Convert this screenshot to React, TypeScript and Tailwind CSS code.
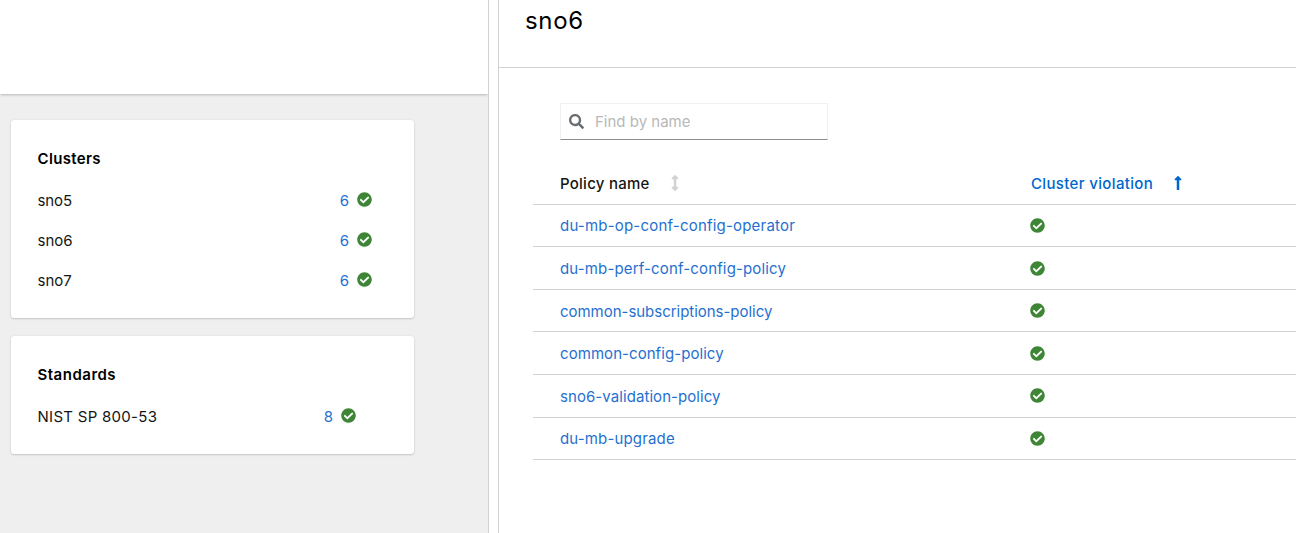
import { FaArrowsAltV, FaCheckCircle, FaLongArrowAltUp, FaSearch } from "react-icons/fa";

interface CardItem {
  name: string;
  count: number;
  className: string;
}

const clusters: CardItem[] = [
  { name: "sno5", count: 6, className: "tracking-[-0.1px]" },
  { name: "sno6", count: 6, className: "tracking-normal" },
  { name: "sno7", count: 6, className: "tracking-normal" },
];

const standards: CardItem[] = [
  { name: "NIST SP 800-53", count: 8, className: "tracking-[0.28px]" },
];

const policies = [
  { name: "du-mb-op-conf-config-operator", className: "tracking-[0.2px]", iconClass: "", height: "h-[42px]" },
  { name: "du-mb-perf-conf-config-policy", className: "pt-[2px] tracking-[0.15px]", iconClass: "", height: "h-[43px]" },
  { name: "common-subscriptions-policy", className: "pt-[2px] tracking-[-0.03px]", iconClass: "", height: "h-[42px]" },
  { name: "common-config-policy", className: "pt-[2px] tracking-[0.06px]", iconClass: "", height: "h-[43px]" },
  { name: "sno6-validation-policy", className: "pt-[2px] tracking-[0.07px]", iconClass: "mb-[2px]", height: "h-[43px]" },
  { name: "du-mb-upgrade", className: "tracking-[0.15px]", iconClass: "", height: "h-[42px]" },
];

function Card({ title, titleClass, items, rowClass }: { title: string; titleClass: string; items: CardItem[]; rowClass: string }) {
  return (
    <section className="rounded-[3px] bg-white pt-[27px] pb-[17px] pl-[26.5px] shadow-[0_1px_2px_rgba(3,3,3,0.16),0_0_2px_rgba(3,3,3,0.08)]">
      <h2 className={`mb-[10px] h-6 text-[15px] leading-6 font-semibold text-black ${titleClass}`}>{title}</h2>
      <ul>
        {items.map((item) => (
          <li key={item.name} className={`flex h-10 items-center justify-between ${rowClass}`}>
            <span className={`text-[#151515] ${item.className}`}>{item.name}</span>
            <span className="flex items-center gap-[8px]">
              <a className="text-[#1f70d0]">{item.count}</a>
              <FaCheckCircle className="mb-[3px] size-[15px] text-[#3e8635]" />
            </span>
          </li>
        ))}
      </ul>
    </section>
  );
}

export default function App() {
  return (
    <div className="flex h-[533px] w-full overflow-hidden bg-white font-['Inter',sans-serif] text-[15px] leading-6 text-[#151515]">
      <aside className="flex w-[489px] shrink-0 flex-col overflow-hidden border-r border-[#d2d2d2] bg-[#efefef]">
        <header className="h-[94px] shrink-0 bg-white shadow-[0_2px_2px_-1px_rgba(3,3,3,0.16),0_1px_4px_rgba(3,3,3,0.08)]" />
        <div className="flex w-[414px] flex-col gap-[18px] pt-[26px] pl-[11px]">
          <Card title="Clusters" titleClass="tracking-[0.35px]" items={clusters} rowClass="pr-[42px]" />
          <Card title="Standards" titleClass="tracking-[0.5px]" items={standards} rowClass="pr-[58px]" />
        </div>
      </aside>
      <div className="w-[10px] shrink-0 border-r border-[#d2d2d2]" />
      <main className="min-w-0 flex-1">
        <header className="h-[68px] border-b border-[#d2d2d2] pt-[5px] pl-[26px]">
          <h1 className="text-2xl leading-8 tracking-[0.65px] text-black">sno6</h1>
        </header>
        <div className="pt-[35px] pl-[34px]">
          <div className="ml-[27px] flex h-[37px] w-[268px] items-center gap-[11px] border border-[#f0f0f0] border-b-[#8a8d90] pl-[8px]">
            <FaSearch className="size-[15px] text-[#6a6e73]" />
            <input aria-label="Find by name" placeholder="Find by name" className="w-[200px] outline-none placeholder:text-[#b8b8b8]" />
          </div>
          <div className="mt-[22px]">
            <div className="flex h-[43px] items-center border-b border-[#d2d2d2] pt-[2px] pl-[27px] font-medium">
              <div className="flex w-[471px] items-center gap-[17px]">
                <span className="tracking-[0.25px]">Policy name</span>
                <FaArrowsAltV className="mb-[3px] size-4 text-[#d2d2d2]" />
              </div>
              <div className="flex items-center gap-[17px] text-[#0066cc]">
                <span className="tracking-[0.35px]">Cluster violation</span>
                <FaLongArrowAltUp className="mb-[2px] size-4" />
              </div>
            </div>
            {policies.map((policy) => (
              <div key={policy.name} className={`flex items-center border-b border-[#d2d2d2] pl-[27px] ${policy.height}`}>
                <a className={`w-[470px] text-[#1f70d0] ${policy.className}`}>{policy.name}</a>
                <FaCheckCircle className={`size-[15px] text-[#3e8635] ${policy.iconClass}`} />
              </div>
            ))}
          </div>
        </div>
      </main>
    </div>
  );
}
